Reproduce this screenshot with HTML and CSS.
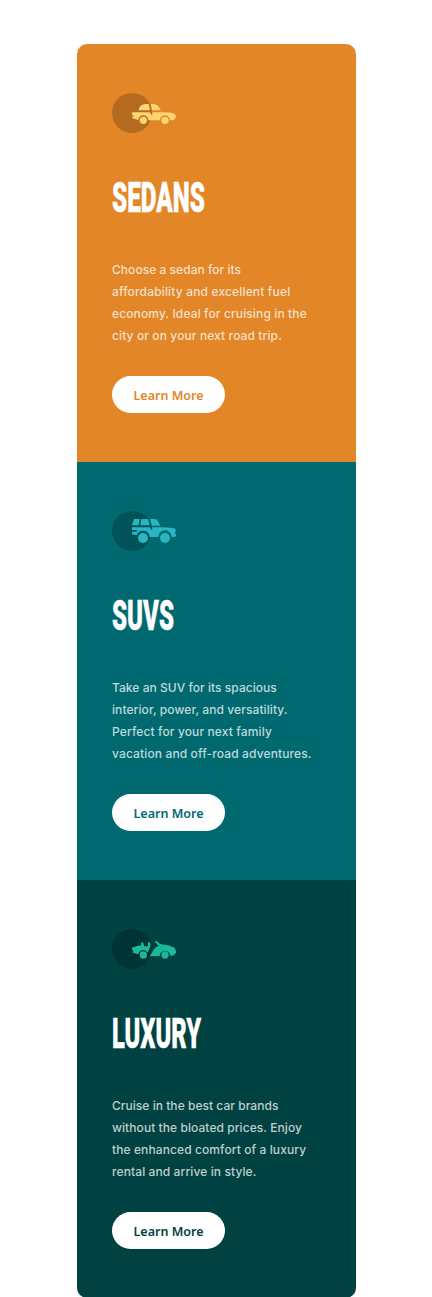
FILE: index.html
```html
<!DOCTYPE html>
<html lang="en">
<head>
<meta charset="utf-8">
<title>Car categories</title>
<link rel="stylesheet" href="styles.css">
</head>
<body>
<main class="cards">
  <section class="card sedans">
    <svg class="icon" viewBox="24 21 192 120" aria-hidden="true">
      <circle class="disc" cx="84" cy="81" r="60"/>
      <path d="M103 73Q108 54 125 54H134L138 73ZM140 54Q158 52 164 62L171 73H144ZM84 79H138L142 87H146L145 79H182Q208 79 214 86L216 91L213 98L208 103H198A15 15 0 0 0 168 103H133A15 15 0 0 0 103 102L86 97L84 94L89 91V88H84Z"/>
      <circle cx="118" cy="103" r="11"/><circle cx="183" cy="103" r="11"/>
    </svg>
    <h2 class="title"><span class="word">SEDANS</span></h2>
    <p class="copy"><span class="l1">Choose a sedan for its</span> <span class="l2">affordability and excellent fuel</span> <span class="l3">economy. Ideal for cruising in the</span> <span class="l4">city or on your next road trip.</span></p>
    <a class="button">Learn More</a>
  </section>
  <section class="card suvs">
    <svg class="icon" viewBox="24 21 192 120" aria-hidden="true">
      <circle class="disc" cx="84" cy="81" r="60"/>
      <path d="M90 45H107L104 64H84ZM112 45H132L137 64H109ZM138 45H152Q158 45 160 49L169 65H144ZM84 70H138L141 77H145L144 70H178L207 72L215 75V84L212 86V89H216V96L212 99H203A20 20 0 0 0 163 99H137A20 20 0 0 0 98 94L84 91V83H98V78H84Z"/>
      <circle cx="117" cy="102" r="15"/><circle cx="183" cy="102" r="15"/>
    </svg>
    <h2 class="title"><span class="word">SUVS</span></h2>
    <p class="copy"><span class="l1">Take an SUV for its spacious</span> <span class="l2">interior, power, and versatility.</span> <span class="l3">Perfect for your next family</span> <span class="l4">vacation and off-road adventures.</span></p>
    <a class="button">Learn More</a>
  </section>
  <section class="card luxury">
    <svg class="icon" viewBox="24 21 192 120" aria-hidden="true">
      <circle class="disc" cx="84" cy="81" r="60"/>
      <path d="M84 77Q99 71 112 70L111 62L117 60L121 73H130L133 71L131 62L137 60L140 70L136 81L131 92A15 15 0 0 0 103 97L90 94L85 91L89 87L84 83ZM153 60L157 56L168 66Q199 69 212 78Q217 84 216 92L209 100L199 102A16 16 0 0 0 167 102L137 103L151 80Q153 75 164 72Z"/>
      <circle cx="118" cy="99" r="11"/><circle cx="183" cy="99" r="11"/>
    </svg>
    <h2 class="title"><span class="word">LUXURY</span></h2>
    <p class="copy"><span class="l1">Cruise in the best car brands</span> <span class="l2">without the bloated prices. Enjoy</span> <span class="l3">the enhanced comfort of a luxury</span> <span class="l4">rental and arrive in style.</span></p>
    <a class="button">Learn More</a>
  </section>
</main>
</body>
</html>
```
FILE: styles.css
```css
* { box-sizing: border-box; }
html { overflow: hidden; }
body { margin: 0; background: #fff; }
.cards {
  width: 279px;
  margin: 44px 0 0 77px;
  border-radius: 10px;
  overflow: hidden;
}
.card {
  display: flex;
  flex-direction: column;
  align-items: flex-start;
  height: 418px;
  padding: 49px 35px;
}
.sedans { background: #e28627; color: #e28627; }
.suvs { background: #006970; color: #006970; }
.luxury { background: #004241; color: #004241; }
.icon { width: 64px; height: 40px; }
.disc { fill: #000; opacity: .2; }
.sedans .icon { fill: #ffd473; }
.suvs .icon { fill: #27b6c4; }
.luxury .icon { fill: #1bb89a; }
.title {
  margin: 41px 0 0;
  height: 48px;
  font: 900 42px/48px Roboto, sans-serif;
  color: #fff;
}
.word {
  display: inline-block;
  transform-origin: 0 50%;
  -webkit-text-stroke: .4px #fff;
}
.sedans .word { transform: scaleX(.577); }
.suvs .word { transform: scaleX(.573); }
.luxury .word { transform: scaleX(.565); }
.copy {
  margin: 37px 0 0;
  font: 500 12px/22px Inter, "Open Sans", sans-serif;
  color: rgba(255, 255, 255, .75);
  white-space: nowrap;
}
.copy span { display: block; }
.l1 { letter-spacing: .04px; }
.sedans .l2 { letter-spacing: .16px; }
.sedans .l3 { letter-spacing: .13px; }
.sedans .l4 { letter-spacing: .11px; }
.suvs .l2 { letter-spacing: .09px; }
.suvs .l3 { letter-spacing: .13px; }
.suvs .l4 { letter-spacing: .13px; }
.luxury .l2 { letter-spacing: .07px; }
.luxury .l3 { letter-spacing: .1px; }
.luxury .l4 { letter-spacing: .1px; }
.button {
  width: 113px;
  height: 37px;
  margin-top: 29px;
  border-radius: 19px;
  background: #fff;
  font: 600 12.5px/39px "Noto Sans", sans-serif;
  text-align: center;
}
```
